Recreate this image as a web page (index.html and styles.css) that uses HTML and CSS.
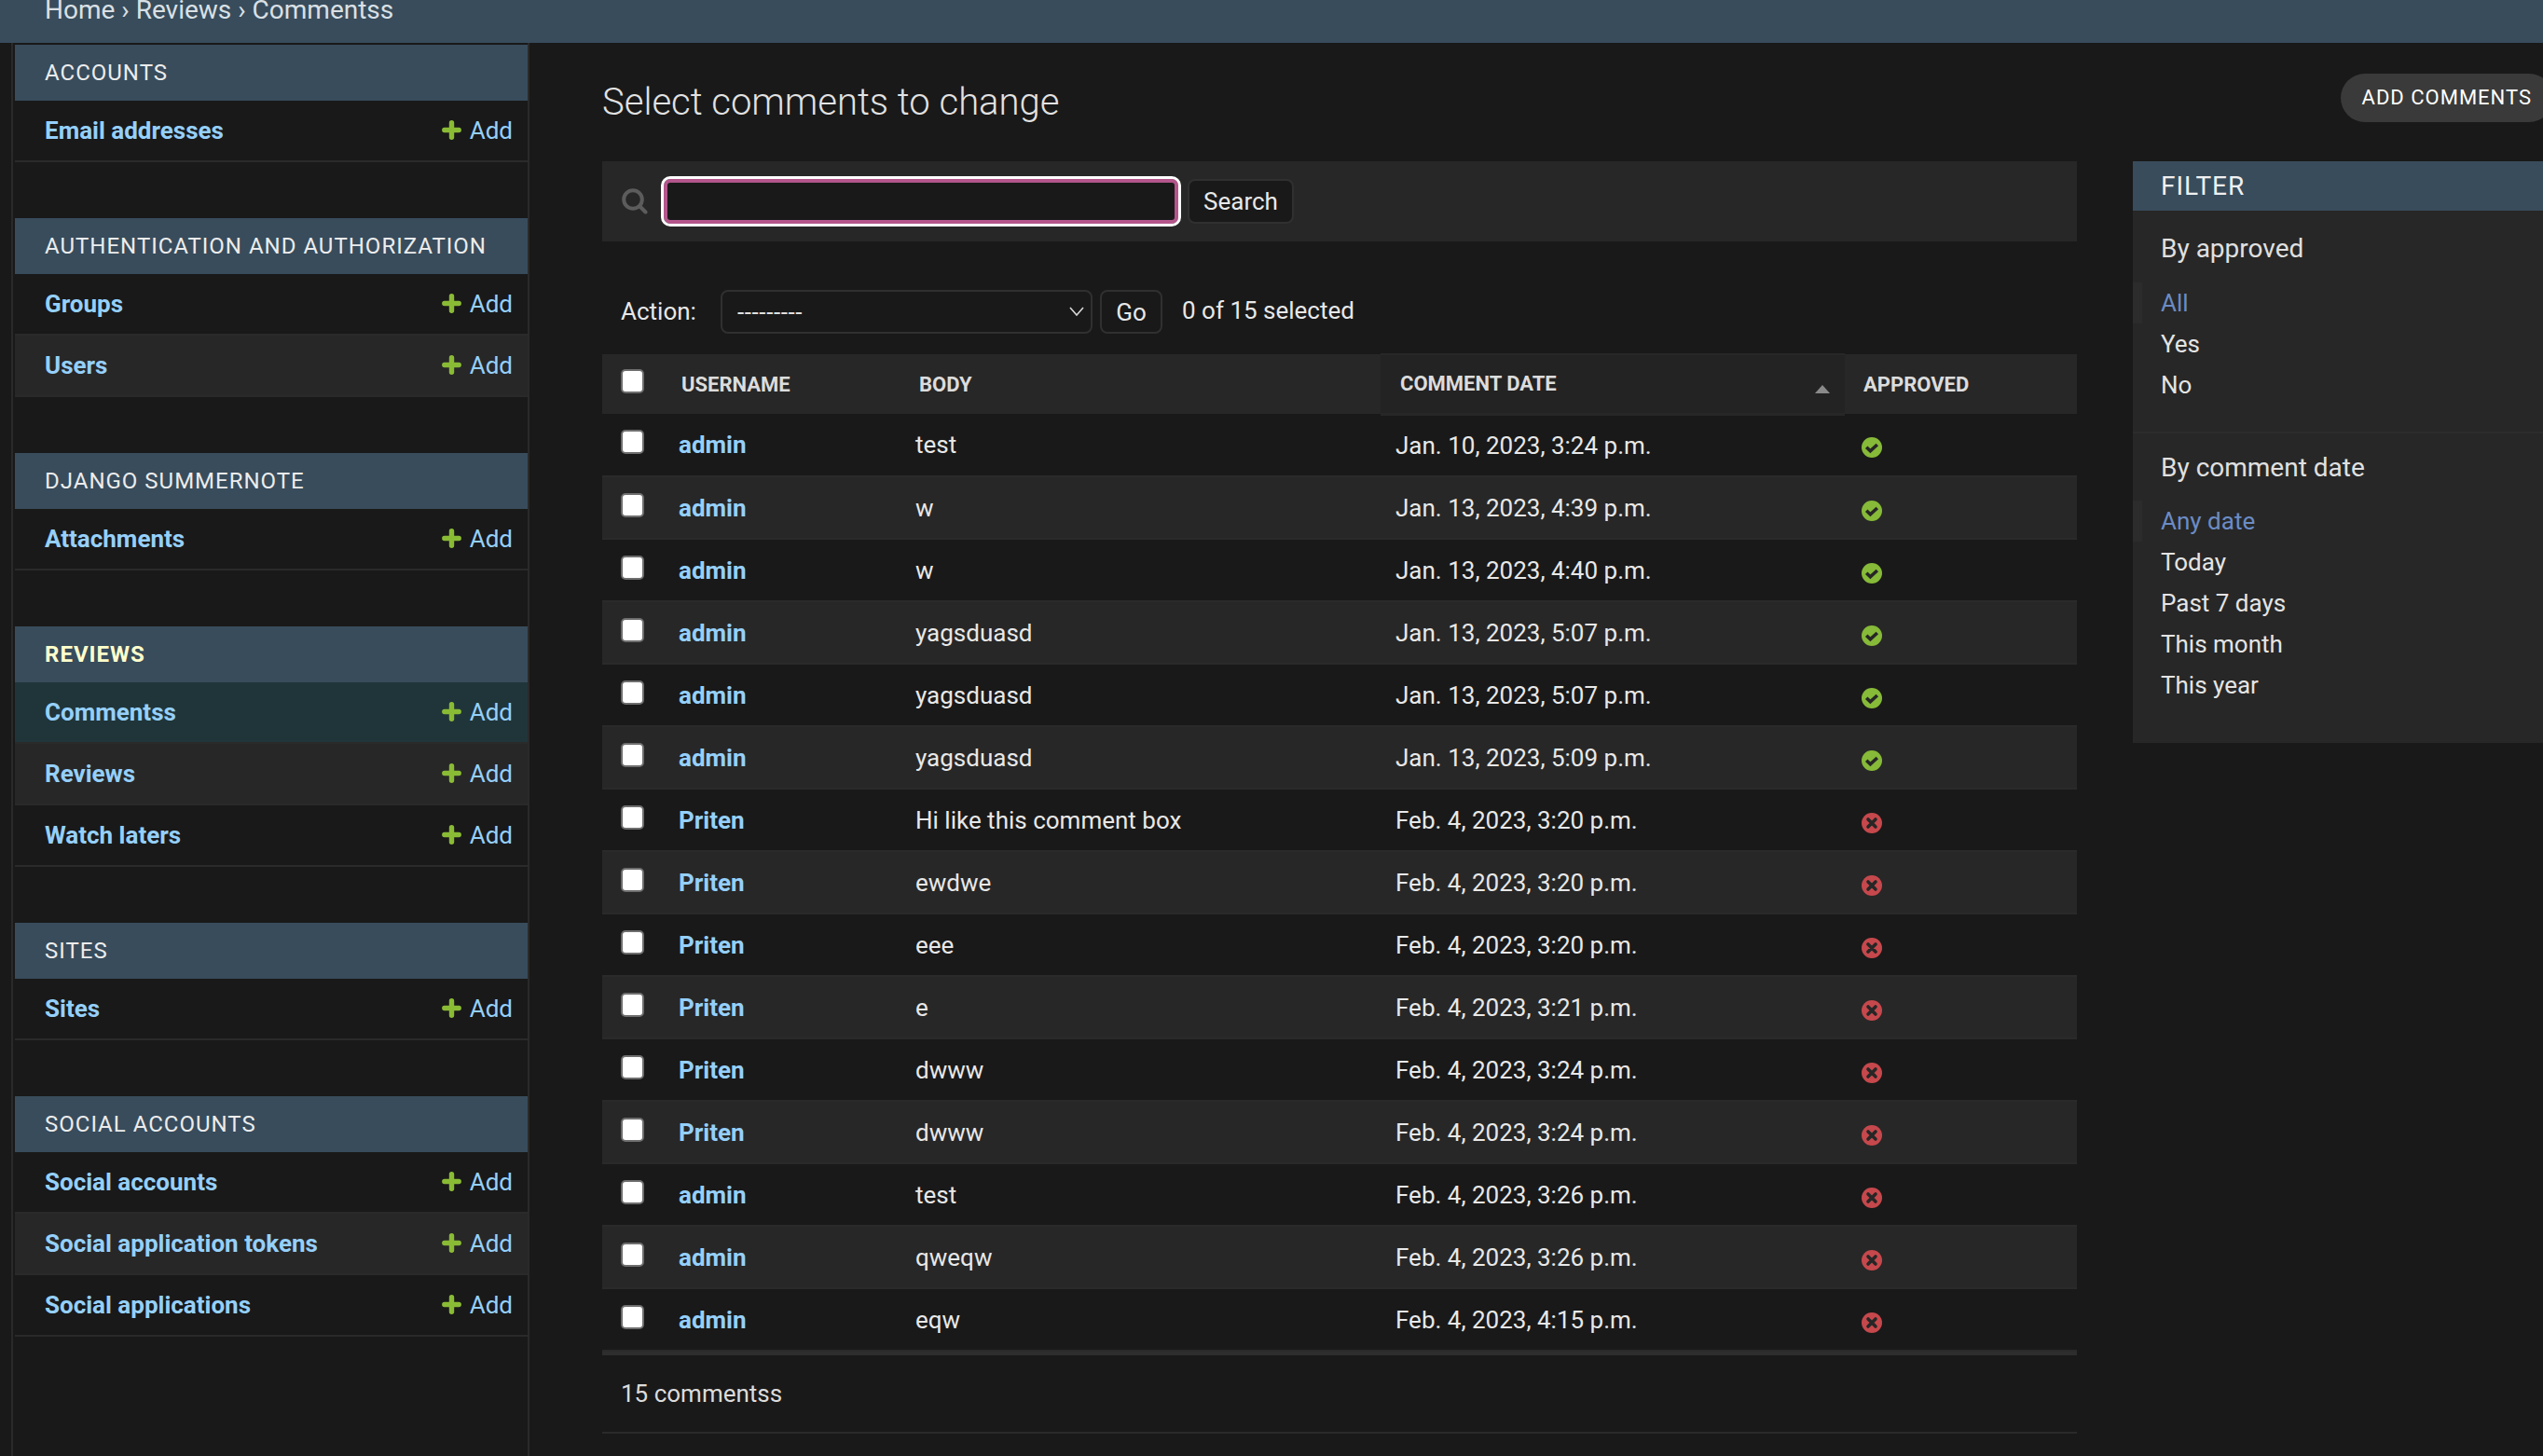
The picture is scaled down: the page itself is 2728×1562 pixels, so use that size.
FILE: index.html
```html
<!DOCTYPE html>
<html lang="en">
<head>
<meta charset="utf-8">
<title>Select comments to change</title>
<link rel="stylesheet" href="styles.css">
</head>
<body>
<svg class="defs" width="0" height="0" aria-hidden="true">
  <symbol id="plus" viewBox="0 0 21 21"><path d="M10.5 2.8v15.4M2.8 10.5h15.4" fill="none" stroke="#8abb35" stroke-width="5.4" stroke-linecap="round"/></symbol>
  <symbol id="ok" viewBox="0 0 22 22"><circle cx="11" cy="11" r="11" fill="#86ba38"/><path d="M5.2 10.8l4.2 4 7.4-6.8" fill="none" stroke="#262626" stroke-width="3.6"/></symbol>
  <symbol id="no" viewBox="0 0 22 22"><circle cx="11" cy="11" r="11" fill="#c6484c"/><path d="M7 7l8 8M15 7l-8 8" fill="none" stroke="#262626" stroke-width="3.6" stroke-linecap="round"/></symbol>
</svg>
<header class="topbar"><div class="crumbs">Home › Reviews › Commentss</div></header>
<div class="shell">
  <nav class="sidebar">
    <section class="module">
      <h2 class="caption">Accounts</h2>
      <div class="mrow"><a class="mlink">Email addresses</a><a class="addlink"><svg class="plus"><use href="#plus"/></svg>Add</a></div>
    </section>
    <section class="module">
      <h2 class="caption">Authentication and Authorization</h2>
      <div class="mrow"><a class="mlink">Groups</a><a class="addlink"><svg class="plus"><use href="#plus"/></svg>Add</a></div>
      <div class="mrow"><a class="mlink">Users</a><a class="addlink"><svg class="plus"><use href="#plus"/></svg>Add</a></div>
    </section>
    <section class="module">
      <h2 class="caption">Django Summernote</h2>
      <div class="mrow"><a class="mlink">Attachments</a><a class="addlink"><svg class="plus"><use href="#plus"/></svg>Add</a></div>
    </section>
    <section class="module">
      <h2 class="caption current">Reviews</h2>
      <div class="mrow active"><a class="mlink">Commentss</a><a class="addlink"><svg class="plus"><use href="#plus"/></svg>Add</a></div>
      <div class="mrow"><a class="mlink">Reviews</a><a class="addlink"><svg class="plus"><use href="#plus"/></svg>Add</a></div>
      <div class="mrow"><a class="mlink">Watch laters</a><a class="addlink"><svg class="plus"><use href="#plus"/></svg>Add</a></div>
    </section>
    <section class="module">
      <h2 class="caption">Sites</h2>
      <div class="mrow"><a class="mlink">Sites</a><a class="addlink"><svg class="plus"><use href="#plus"/></svg>Add</a></div>
    </section>
    <section class="module">
      <h2 class="caption">Social Accounts</h2>
      <div class="mrow"><a class="mlink">Social accounts</a><a class="addlink"><svg class="plus"><use href="#plus"/></svg>Add</a></div>
      <div class="mrow"><a class="mlink">Social application tokens</a><a class="addlink"><svg class="plus"><use href="#plus"/></svg>Add</a></div>
      <div class="mrow"><a class="mlink">Social applications</a><a class="addlink"><svg class="plus"><use href="#plus"/></svg>Add</a></div>
    </section>
  </nav>
  <main class="content">
    <div class="titlebar">
      <h1 class="title">Select comments to change</h1>
      <a class="addbtn">ADD COMMENTS</a>
    </div>
    <div class="columns">
      <div class="changelist">
        <form class="searchbar">
          <svg class="searchicon" viewBox="0 0 28 28"><circle cx="12" cy="12" r="9.8" fill="none" stroke="#5c5c5c" stroke-width="4"/><path d="M19.5 19.5l6 6" stroke="#5c5c5c" stroke-width="4" stroke-linecap="round"/></svg>
          <input class="searchinput" type="text" aria-label="Search">
          <button class="btn searchbtn" type="button">Search</button>
        </form>
        <div class="actions">
          <span class="actlabel">Action:</span>
          <div class="selectwrap">
            <select class="actselect" aria-label="Action"><option>---------</option></select>
            <svg class="chevron" viewBox="0 0 16 10"><path d="M1 1l7 8 7-8" fill="none" stroke="#d8d8d8" stroke-width="1.6"/></svg>
          </div>
          <button class="btn gobtn" type="button">Go</button>
          <span class="counter">0 of 15 selected</span>
        </div>
        <table class="results">
          <colgroup><col class="c1"><col class="c2"><col class="c3"><col class="c4"><col class="c5"></colgroup>
          <thead>
            <tr>
              <th class="chk"><input class="box" type="checkbox" aria-label="Select all"></th>
              <th>Username</th>
              <th>Body</th>
              <th class="sorted">Comment date<span class="arrow"></span></th>
              <th>Approved</th>
            </tr>
          </thead>
          <tbody>
            <tr><td class="chk"><input class="box" type="checkbox"></td><td><a class="ulink">admin</a></td><td>test</td><td>Jan. 10, 2023, 3:24 p.m.</td><td class="st"><svg class="state"><use href="#ok"/></svg></td></tr>
            <tr><td class="chk"><input class="box" type="checkbox"></td><td><a class="ulink">admin</a></td><td>w</td><td>Jan. 13, 2023, 4:39 p.m.</td><td class="st"><svg class="state"><use href="#ok"/></svg></td></tr>
            <tr><td class="chk"><input class="box" type="checkbox"></td><td><a class="ulink">admin</a></td><td>w</td><td>Jan. 13, 2023, 4:40 p.m.</td><td class="st"><svg class="state"><use href="#ok"/></svg></td></tr>
            <tr><td class="chk"><input class="box" type="checkbox"></td><td><a class="ulink">admin</a></td><td>yagsduasd</td><td>Jan. 13, 2023, 5:07 p.m.</td><td class="st"><svg class="state"><use href="#ok"/></svg></td></tr>
            <tr><td class="chk"><input class="box" type="checkbox"></td><td><a class="ulink">admin</a></td><td>yagsduasd</td><td>Jan. 13, 2023, 5:07 p.m.</td><td class="st"><svg class="state"><use href="#ok"/></svg></td></tr>
            <tr><td class="chk"><input class="box" type="checkbox"></td><td><a class="ulink">admin</a></td><td>yagsduasd</td><td>Jan. 13, 2023, 5:09 p.m.</td><td class="st"><svg class="state"><use href="#ok"/></svg></td></tr>
            <tr><td class="chk"><input class="box" type="checkbox"></td><td><a class="ulink">Priten</a></td><td>Hi like this comment box</td><td>Feb. 4, 2023, 3:20 p.m.</td><td class="st"><svg class="state"><use href="#no"/></svg></td></tr>
            <tr><td class="chk"><input class="box" type="checkbox"></td><td><a class="ulink">Priten</a></td><td>ewdwe</td><td>Feb. 4, 2023, 3:20 p.m.</td><td class="st"><svg class="state"><use href="#no"/></svg></td></tr>
            <tr><td class="chk"><input class="box" type="checkbox"></td><td><a class="ulink">Priten</a></td><td>eee</td><td>Feb. 4, 2023, 3:20 p.m.</td><td class="st"><svg class="state"><use href="#no"/></svg></td></tr>
            <tr><td class="chk"><input class="box" type="checkbox"></td><td><a class="ulink">Priten</a></td><td>e</td><td>Feb. 4, 2023, 3:21 p.m.</td><td class="st"><svg class="state"><use href="#no"/></svg></td></tr>
            <tr><td class="chk"><input class="box" type="checkbox"></td><td><a class="ulink">Priten</a></td><td>dwww</td><td>Feb. 4, 2023, 3:24 p.m.</td><td class="st"><svg class="state"><use href="#no"/></svg></td></tr>
            <tr><td class="chk"><input class="box" type="checkbox"></td><td><a class="ulink">Priten</a></td><td>dwww</td><td>Feb. 4, 2023, 3:24 p.m.</td><td class="st"><svg class="state"><use href="#no"/></svg></td></tr>
            <tr><td class="chk"><input class="box" type="checkbox"></td><td><a class="ulink">admin</a></td><td>test</td><td>Feb. 4, 2023, 3:26 p.m.</td><td class="st"><svg class="state"><use href="#no"/></svg></td></tr>
            <tr><td class="chk"><input class="box" type="checkbox"></td><td><a class="ulink">admin</a></td><td>qweqw</td><td>Feb. 4, 2023, 3:26 p.m.</td><td class="st"><svg class="state"><use href="#no"/></svg></td></tr>
            <tr><td class="chk"><input class="box" type="checkbox"></td><td><a class="ulink">admin</a></td><td>eqw</td><td>Feb. 4, 2023, 4:15 p.m.</td><td class="st"><svg class="state"><use href="#no"/></svg></td></tr>
          </tbody>
        </table>
        <p class="paginator">15 commentss</p>
      </div>
      <aside class="filter">
        <h2 class="filterhead">FILTER</h2>
        <div class="fgroup">
          <h3 class="fhead">By approved</h3>
          <ul class="flist">
            <li class="fitem selected">All</li>
            <li class="fitem">Yes</li>
            <li class="fitem">No</li>
          </ul>
        </div>
        <div class="fgroup last">
          <h3 class="fhead">By comment date</h3>
          <ul class="flist">
            <li class="fitem selected">Any date</li>
            <li class="fitem">Today</li>
            <li class="fitem">Past 7 days</li>
            <li class="fitem">This month</li>
            <li class="fitem">This year</li>
          </ul>
        </div>
      </aside>
    </div>
  </main>
</div>
</body>
</html>
```
FILE: styles.css
```css
* { box-sizing: border-box; }
html, body { margin: 0; padding: 0; }
body {
  width: 2728px;
  height: 1562px;
  overflow: hidden;
  background: #191919;
  color: #e8e8e8;
  font-family: Roboto, "Liberation Sans", sans-serif;
  font-size: 26px;
}
.defs { position: absolute; }

.topbar {
  height: 46px;
  background: #384c5c;
  display: flex;
  flex-direction: column;
  justify-content: flex-end;
  padding: 0 48px 20px;
  overflow: hidden;
}
.crumbs { font-size: 28px; line-height: 30px; color: #d9e0e5; flex: none; }

.shell { display: flex; height: 1516px; }

.sidebar {
  flex: none;
  width: 556px;
  margin-left: 12px;
  padding: 2px 0 0 2px;
  border-left: 2px solid #2a2a2a;
  border-right: 2px solid #2a2a2a;
}
.module { margin-bottom: 60px; }
.caption {
  margin: 0;
  height: 60px;
  background: #384c5c;
  padding-left: 32px;
  display: flex;
  align-items: center;
  font-size: 24px;
  font-weight: 400;
  letter-spacing: 1px;
  text-transform: uppercase;
  color: #ececec;
}
.caption.current { font-weight: 700; color: #ffffcc; }
.mrow {
  height: 66px;
  display: flex;
  align-items: center;
  justify-content: space-between;
  padding: 0 16px 1px 32px;
  border-bottom: 2px solid #2a2a2a;
}
.module .mrow:nth-child(3) { background: #272727; }
.mrow.active { background: #203539; }
.mlink { font-weight: 700; color: #95d0fb; }
.addlink { display: flex; align-items: center; color: #95d0fb; }
.plus { width: 21px; height: 21px; margin-right: 9px; }

.content { flex: 1; min-width: 0; padding-left: 78px; }
.titlebar { height: 127px; display: flex; align-items: flex-start; }
.title {
  margin: 38px 0 0;
  font-size: 40px;
  line-height: 52px;
  font-weight: 300;
  color: #e2e2e2;
}
.addbtn {
  flex: none;
  margin: 33px -11px 0 auto;
  height: 52px;
  padding: 0 23px 2px;
  display: flex;
  align-items: center;
  border-radius: 26px;
  background: #3a3a3a;
  color: #fff;
  font-size: 22px;
  letter-spacing: 1px;
}

.columns { display: flex; align-items: flex-start; gap: 60px; }
.changelist { flex: none; width: 1582px; }

.searchbar {
  height: 86px;
  background: #272727;
  display: flex;
  align-items: center;
  padding-left: 21px;
}
.searchicon { width: 28px; height: 28px; margin-right: 14px; }
.searchinput {
  width: 558px;
  height: 54px;
  border: 3px solid #fff;
  border-radius: 10px;
  background: #191919;
  box-shadow: inset 0 0 0 4px #b4568c;
  outline: none;
  padding: 0 10px;
}
.btn {
  height: 48px;
  background: #191919;
  border: 2px solid #303030;
  border-radius: 8px;
  color: #e8e8e8;
  font-family: inherit;
  font-size: 26px;
  padding: 0;
}
.searchbtn { width: 114px; margin-left: 7px; }

.actions {
  height: 120px;
  display: flex;
  align-items: flex-end;
  padding: 0 0 21px 20px;
}
.actlabel { width: 107px; height: 47px; line-height: 47px; }
.selectwrap { position: relative; width: 399px; height: 47px; }
.actselect {
  width: 100%;
  height: 100%;
  appearance: none;
  -webkit-appearance: none;
  background: #191919;
  border: 2px solid #303030;
  border-radius: 8px;
  color: #e0e0e0;
  font-family: inherit;
  font-size: 26px;
  letter-spacing: 0.6px;
  padding: 0 0 0 16px;
}
.chevron { position: absolute; right: 9px; top: 18px; width: 16px; height: 10px; pointer-events: none; }
.gobtn { width: 67px; height: 47px; margin-left: 8px; }
.counter { margin-left: 21px; height: 47px; line-height: 44px; }

.results { width: 1582px; border-collapse: collapse; table-layout: fixed; }
.c1 { width: 65px; }
.c2 { width: 255px; }
.c3 { width: 515px; }
.c4 { width: 498px; }
.c5 { width: 249px; }
.results th {
  height: 64px;
  padding: 0 0 0 20px;
  background: #272727;
  text-align: left;
  font-size: 22px;
  font-weight: 700;
  color: #dcdcdc;
  text-transform: uppercase;
}
.results th.sorted {
  position: relative;
  background: #232323;
  border-top: 2px solid #272727;
  border-bottom: 3px solid #272727;
  padding-left: 21px;
}
.arrow {
  position: absolute;
  right: 16px;
  top: 32px;
  width: 0;
  height: 0;
  border-left: 8px solid transparent;
  border-right: 8px solid transparent;
  border-bottom: 9px solid #8a8a8a;
}
.results td {
  height: 67px;
  padding: 0 0 0 16px;
  border-bottom: 2px solid #2a2a2a;
}
.results tbody tr:nth-child(even) td { background: #272727; }
.results .chk { padding: 0 0 6px 20px; vertical-align: middle; }
.results td:nth-child(2) { padding-left: 17px; }
.results .st { padding: 6px 0 0 18px; vertical-align: middle; }
.ulink { font-weight: 700; color: #95d0fb; }
.box {
  display: block;
  appearance: none;
  -webkit-appearance: none;
  width: 25px;
  height: 26px;
  margin: 0;
  background: #fff;
  border: 2px solid #6e6e6e;
  border-radius: 5px;
}
.state { display: block; width: 22px; height: 22px; }

.paginator {
  margin: 0;
  height: 88px;
  display: flex;
  align-items: center;
  padding-left: 20px;
  border-top: 4px solid #2e2e2e;
  border-bottom: 2px solid #2a2a2a;
  color: #dcdcdc;
}

.filter { flex: none; width: 440px; height: 624px; background: #272727; }
.filterhead {
  margin: 0;
  height: 53px;
  background: #384c5c;
  display: flex;
  align-items: center;
  padding-left: 30px;
  font-size: 28px;
  font-weight: 400;
  letter-spacing: 1px;
  color: #f0f0f0;
}
.fgroup { height: 239px; border-bottom: 2px solid #2c2c2c; padding-top: 16px; }
.fgroup.last { border-bottom: none; height: auto; padding-top: 12px; }
.fhead {
  margin: 0;
  padding-left: 30px;
  height: 50px;
  line-height: 50px;
  font-size: 28px;
  font-weight: 400;
  color: #e0e0e0;
}
.flist { list-style: none; margin: 11px 0 0; padding: 0; }
.last .flist { margin-top: 10px; }
.fitem { height: 44px; line-height: 44px; padding-left: 30px; color: #e4e4e4; }
.fitem.selected { color: #6b8cc6; box-shadow: inset 10px 0 0 #2c2c2c; }
```
